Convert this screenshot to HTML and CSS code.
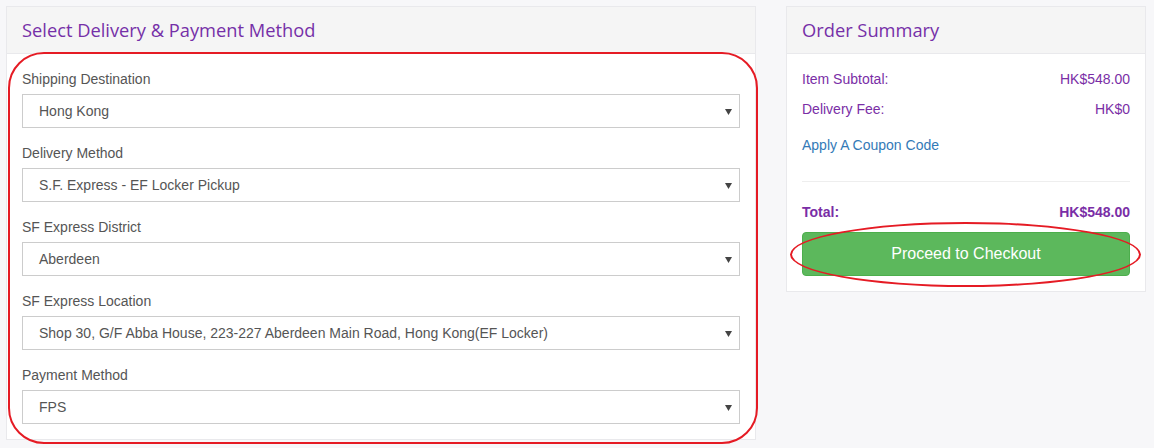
FILE: index.html
```html
<!DOCTYPE html>
<html>
<head>
<meta charset="utf-8">
<link rel="stylesheet" href="styles.css">
</head>
<body>
<div class="page">
  <section class="panel panel-main">
    <div class="panel-head"><h2 class="panel-title">Select Delivery &amp; Payment Method</h2></div>
    <div class="panel-body">
      <div class="form-group">
        <div class="label">Shipping Destination</div>
        <div class="select"><span>Hong Kong</span><svg class="caret" width="7" height="6" viewBox="0 0 7 6"><path d="M0 0H7L3.5 6Z" fill="#444"/></svg></div>
      </div>
      <div class="form-group">
        <div class="label">Delivery Method</div>
        <div class="select"><span>S.F. Express - EF Locker Pickup</span><svg class="caret" width="7" height="6" viewBox="0 0 7 6"><path d="M0 0H7L3.5 6Z" fill="#444"/></svg></div>
      </div>
      <div class="form-group">
        <div class="label">SF Express District</div>
        <div class="select"><span>Aberdeen</span><svg class="caret" width="7" height="6" viewBox="0 0 7 6"><path d="M0 0H7L3.5 6Z" fill="#444"/></svg></div>
      </div>
      <div class="form-group">
        <div class="label">SF Express Location</div>
        <div class="select"><span>Shop 30, G/F Abba House, 223-227 Aberdeen Main Road, Hong Kong(EF Locker)</span><svg class="caret" width="7" height="6" viewBox="0 0 7 6"><path d="M0 0H7L3.5 6Z" fill="#444"/></svg></div>
      </div>
      <div class="form-group last">
        <div class="label">Payment Method</div>
        <div class="select"><span>FPS</span><svg class="caret" width="7" height="6" viewBox="0 0 7 6"><path d="M0 0H7L3.5 6Z" fill="#444"/></svg></div>
      </div>
    </div>
    <div class="mark-rect"></div>
  </section>

  <aside class="panel panel-side">
    <div class="panel-head"><h2 class="panel-title">Order Summary</h2></div>
    <div class="panel-body">
      <div class="row"><span>Item Subtotal:</span><span>HK$548.00</span></div>
      <div class="row row2"><span>Delivery Fee:</span><span>HK$0</span></div>
      <a class="coupon">Apply A Coupon Code</a>
      <hr class="sep">
      <div class="row total"><span>Total:</span><span>HK$548.00</span></div>
      <div class="btn-wrap">
        <button class="btn">Proceed to Checkout</button>
        <div class="mark-ellipse"></div>
      </div>
    </div>
  </aside>
</div>
</body>
</html>
```

FILE: styles.css
```css
* { box-sizing: border-box; }
html, body { margin: 0; padding: 0; }
body {
  background: #f7f7f9;
  font-family: "Liberation Sans", Arial, sans-serif;
  font-size: 14px;
  color: #555;
}
.page {
  display: flex;
  align-items: flex-start;
  gap: 30px;
  padding: 6px;
}
.panel {
  position: relative;
  background: #fff;
  border: 1px solid #e9e9ec;
}
.panel-main { width: 750px; }
.panel-side { width: 360px; }
.panel-head {
  height: 47px;
  background: #f5f5f5;
  border-bottom: 1px solid #e9e9ec;
  padding: 0 15px;
  display: flex;
  align-items: center;
}
.panel-title {
  margin: 0;
  font-family: "Open Sans", "Noto Sans", sans-serif;
  font-weight: 400;
  font-size: 18.3px;
  color: #7530a8;
  line-height: 24px;
  padding-bottom: 1px;
}
.panel-body { padding: 15px; }
.form-group { margin-bottom: 15px; }
.form-group.last { margin-bottom: 0; }
.label {
  line-height: 20px;
  margin-bottom: 5px;
  color: #555;
}
.select {
  height: 34px;
  border: 1px solid #ccc;
  display: flex;
  align-items: center;
  justify-content: space-between;
  padding: 0 7px 0 16px;
  color: #555;
}
.caret { display: block; margin-top: 1px; }
.mark-rect {
  position: absolute;
  left: 1px;
  top: 45px;
  width: 750px;
  height: 392px;
  border: 2px solid #e51b24;
  border-radius: 36px;
  pointer-events: none;
}
.row {
  display: flex;
  justify-content: space-between;
  line-height: 20px;
  color: #7a2ea6;
}
.row2 { margin-top: 10px; }
.coupon {
  display: block;
  margin-top: 16px;
  line-height: 20px;
  color: #337ab7;
  text-decoration: none;
}
.sep {
  border: 0;
  border-top: 1px solid #eee;
  margin: 26px 0 20px;
}
.total { font-weight: bold; }
.btn-wrap { position: relative; margin-top: 10px; }
.btn {
  display: block;
  width: 100%;
  height: 44px;
  border: 1px solid #4cae4c;
  border-radius: 4px;
  background: #5cb85c;
  color: #fff;
  font-family: "Liberation Sans", Arial, sans-serif;
  font-size: 16px;
  padding: 0;
}
.mark-ellipse {
  position: absolute;
  left: -12px;
  top: -10px;
  width: 351px;
  height: 65px;
  border: 2px solid #e51b24;
  border-radius: 50%;
  pointer-events: none;
}
```
